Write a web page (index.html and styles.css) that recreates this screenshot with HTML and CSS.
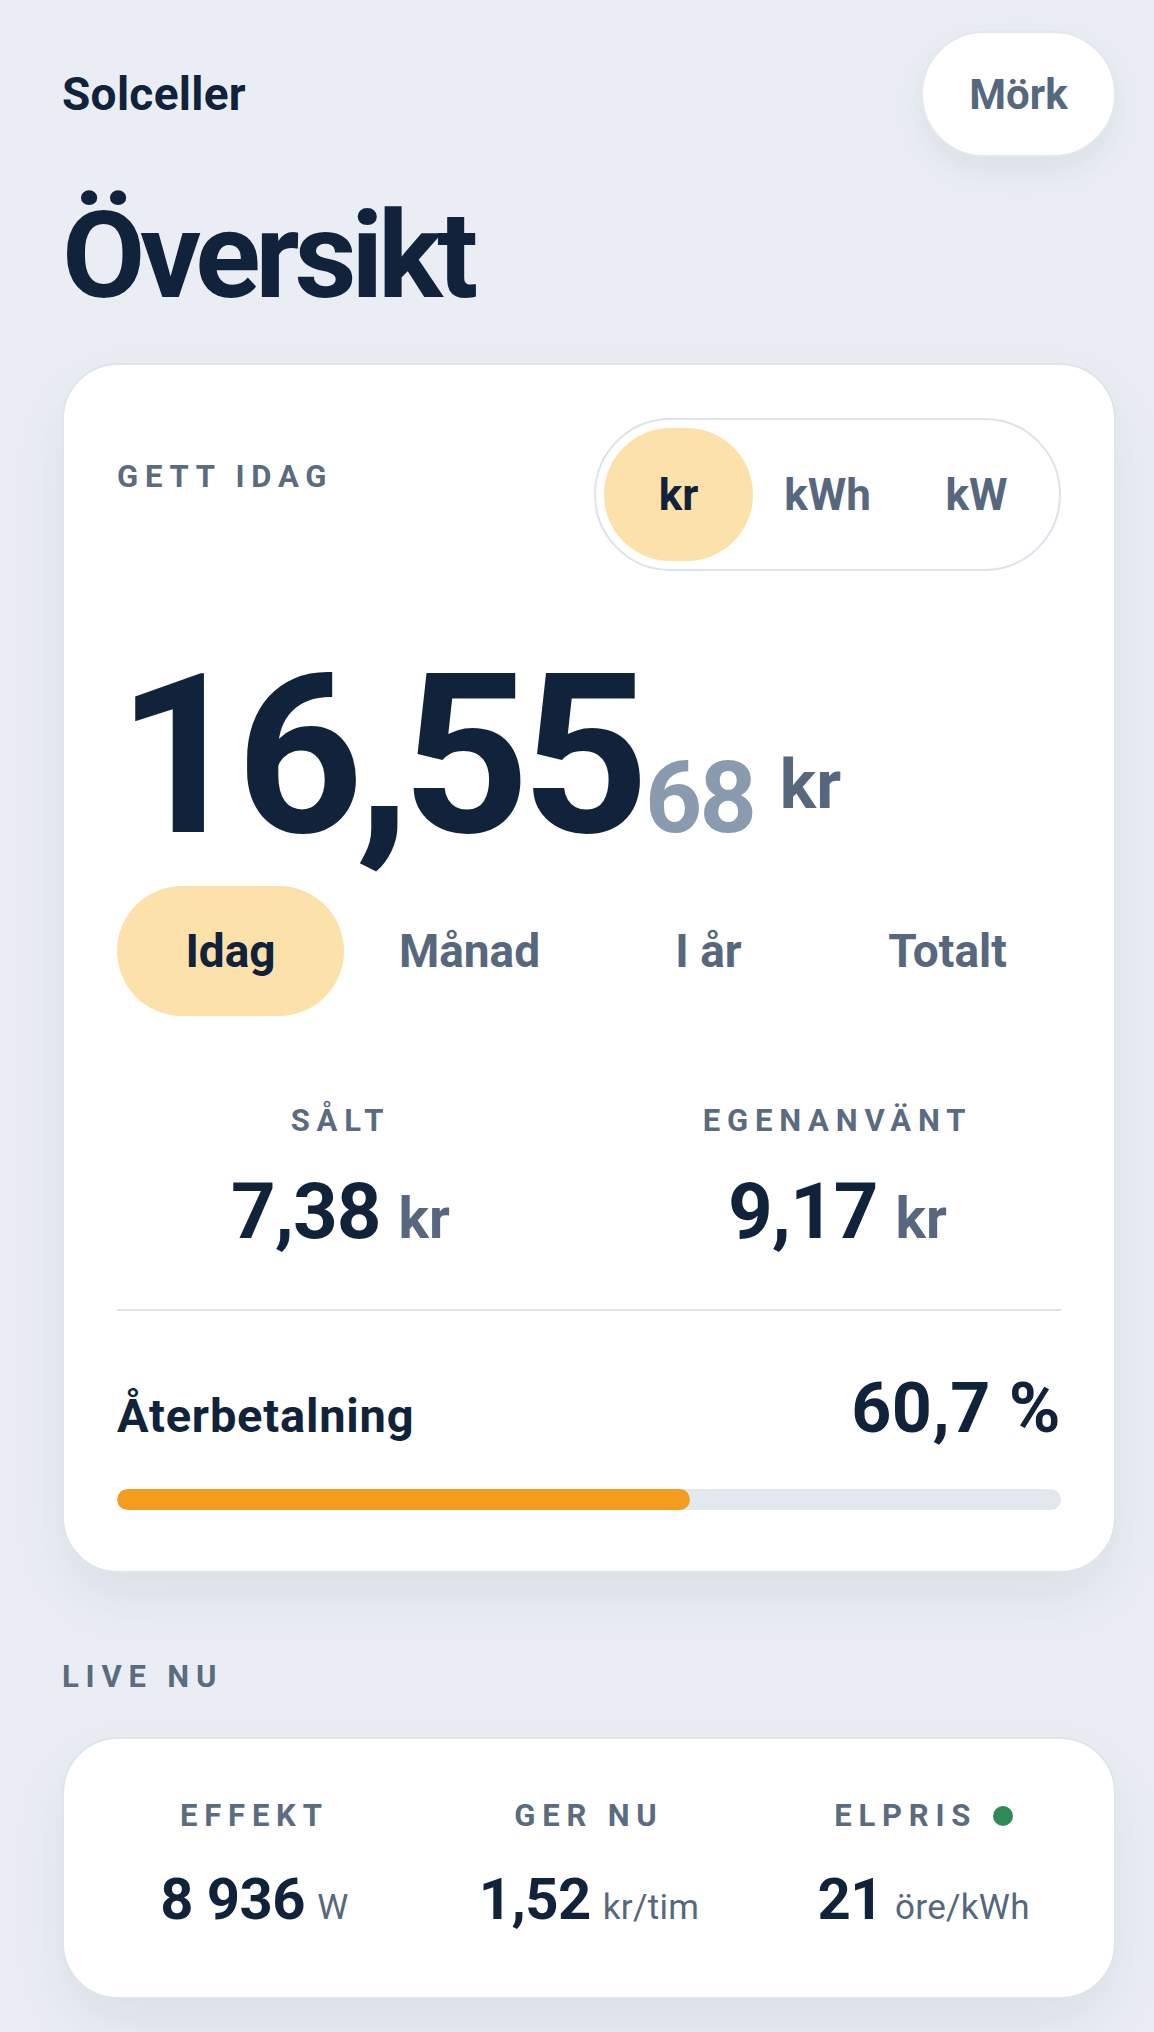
FILE: index.html
```html
<!DOCTYPE html>
<html lang="sv">
<head>
<meta charset="utf-8">
<title>Solceller – Översikt</title>
<link rel="stylesheet" href="styles.css">
</head>
<body>
<main class="page">
  <header class="topbar">
    <span class="brand">Solceller</span>
    <button class="theme-btn" type="button">Mörk</button>
  </header>

  <h1 class="title">Översikt</h1>

  <section class="card summary">
    <div class="summary-head">
      <span class="eyebrow">GETT IDAG</span>
      <div class="unit-switch">
        <button class="seg is-active" type="button">kr</button>
        <button class="seg" type="button">kWh</button>
        <button class="seg" type="button">kW</button>
      </div>
    </div>

    <div class="amount"><span class="amount-int">16,55</span><span class="amount-dec">68</span><span class="amount-unit">kr</span></div>

    <nav class="periods">
      <button class="period is-active" type="button">Idag</button>
      <button class="period" type="button">Månad</button>
      <button class="period" type="button">I år</button>
      <button class="period" type="button">Totalt</button>
    </nav>

    <div class="split">
      <div class="split-item">
        <span class="eyebrow">SÅLT</span>
        <span class="split-value">7,38<small>kr</small></span>
      </div>
      <div class="split-item">
        <span class="eyebrow">EGENANVÄNT</span>
        <span class="split-value">9,17<small>kr</small></span>
      </div>
    </div>

    <div class="payback">
      <div class="payback-row">
        <span class="payback-label">Återbetalning</span>
        <span class="payback-value">60,7 %</span>
      </div>
      <div class="bar"><div class="bar-fill" style="width: 60.7%"></div></div>
    </div>
  </section>

  <h2 class="eyebrow section-label">LIVE NU</h2>

  <section class="card live">
    <div class="live-item">
      <span class="eyebrow">EFFEKT</span>
      <span class="live-value">8 936<small>W</small></span>
    </div>
    <div class="live-item">
      <span class="eyebrow">GER NU</span>
      <span class="live-value">1,52<small>kr/tim</small></span>
    </div>
    <div class="live-item">
      <span class="eyebrow">ELPRIS<i class="dot"></i></span>
      <span class="live-value">21<small>öre/kWh</small></span>
    </div>
  </section>
</main>
</body>
</html>
```

FILE: styles.css
```css
* {
  box-sizing: border-box;
}

html,
body {
  margin: 0;
  padding: 0;
}

body {
  background: #eaeef4;
  color: #10233b;
  font-family: Roboto, "Noto Sans", "Liberation Sans", sans-serif;
  min-height: 2032px;
}

button {
  font-family: inherit;
  border: 0;
  background: none;
  padding: 0;
  cursor: pointer;
}

.page {
  padding: 31px 38px 40px 62px;
}

/* top bar */
.topbar {
  display: flex;
  align-items: center;
  justify-content: space-between;
  height: 126px;
}

.brand {
  font-size: 46px;
  font-weight: 700;
  letter-spacing: 0.3px;
  color: #10233b;
}

.theme-btn {
  width: 195px;
  height: 126px;
  border-radius: 63px;
  background: #ffffff;
  border: 2px solid #e3e8ef;
  color: #56677e;
  font-size: 42px;
  font-weight: 700;
  box-shadow: 0 14px 34px rgba(40, 60, 95, 0.08);
}

.title {
  margin: 39px 0 0;
  font-size: 121px;
  line-height: 1;
  font-weight: 700;
  letter-spacing: -5.3px;
  color: #10233b;
}

/* cards */
.card {
  background: #ffffff;
  border: 2px solid #dfe5ec;
  border-radius: 56px;
  box-shadow: 0 26px 60px rgba(40, 60, 95, 0.08);
}

.eyebrow {
  display: block;
  font-size: 31px;
  line-height: 1.2;
  font-weight: 700;
  letter-spacing: 6.8px;
  color: #5b6b80;
}

.summary {
  margin-top: 46px;
  padding: 53px 53px 61px;
}

.summary-head {
  display: flex;
  justify-content: space-between;
  align-items: flex-start;
}

.summary-head .eyebrow {
  margin-top: 40px;
}

.unit-switch {
  display: flex;
  padding: 8px;
  border: 2px solid #dde3eb;
  border-radius: 80px;
}

.seg {
  width: 149px;
  height: 133px;
  border-radius: 67px;
  font-size: 44px;
  font-weight: 700;
  color: #56677e;
}

.seg.is-active {
  background: #fde1ab;
  color: #10233b;
}

/* headline amount */
.amount {
  margin-top: 74px;
  font-size: 222px;
  line-height: 1;
  white-space: nowrap;
}

.amount-int {
  font-weight: 700;
  letter-spacing: -8px;
  color: #10233b;
}

.amount-dec {
  font-size: 100px;
  font-weight: 700;
  letter-spacing: -3px;
  color: #8a9bb0;
  margin-left: 4px;
}

.amount-unit {
  font-size: 68px;
  font-weight: 700;
  color: #56677e;
  margin-left: 26px;
  vertical-align: 24px;
}

/* period tabs */
.periods {
  margin-top: 19px;
  display: grid;
  grid-template-columns: repeat(4, 1fr);
  column-gap: 12px;
}

.period {
  height: 130px;
  border-radius: 65px;
  font-size: 46px;
  font-weight: 700;
  color: #56677e;
}

.period.is-active {
  background: #fde1ab;
  color: #10233b;
}

/* sold / self-used */
.split {
  margin-top: 86px;
  display: grid;
  grid-template-columns: 1fr 1fr;
  column-gap: 50px;
  padding-bottom: 58px;
  border-bottom: 2px solid #dde3ea;
}

.split-item {
  display: flex;
  flex-direction: column;
  align-items: center;
}

.split-value {
  margin-top: 34px;
  font-size: 78px;
  line-height: 1;
  font-weight: 700;
  letter-spacing: -1px;
  color: #10233b;
}

.split-value small {
  font-size: 57px;
  font-weight: 700;
  letter-spacing: 0;
  color: #56677e;
  margin-left: 18px;
}

/* payback */
.payback {
  margin-top: 62px;
}

.payback-row {
  display: flex;
  justify-content: space-between;
  align-items: baseline;
  line-height: 1;
}

.payback-label {
  font-size: 47px;
  font-weight: 700;
  letter-spacing: 0.8px;
}

.payback-value {
  font-size: 70px;
  font-weight: 700;
  letter-spacing: 0.5px;
}

.bar {
  margin-top: 46px;
  height: 21px;
  border-radius: 11px;
  background: #e3e8ef;
  overflow: hidden;
}

.bar-fill {
  height: 100%;
  border-radius: 11px;
  background: #f39c1e;
}

/* live section */
.section-label {
  margin: 85px 0 0;
}

.live {
  margin-top: 42px;
  padding: 58px 23px 69px;
  display: grid;
  grid-template-columns: repeat(3, 1fr);
}

.live-item {
  display: flex;
  flex-direction: column;
  align-items: center;
}

.live-item .eyebrow {
  display: flex;
  align-items: center;
}

.dot {
  display: inline-block;
  width: 20px;
  height: 20px;
  border-radius: 50%;
  background: #2f8a56;
  margin-left: 16px;
}

.live-value {
  margin-top: 35px;
  font-size: 58px;
  line-height: 1;
  font-weight: 700;
  letter-spacing: -0.5px;
  color: #10233b;
  white-space: nowrap;
}

.live-value small {
  font-size: 35px;
  font-weight: 400;
  letter-spacing: 0.3px;
  color: #56677e;
  margin-left: 12px;
}
```
